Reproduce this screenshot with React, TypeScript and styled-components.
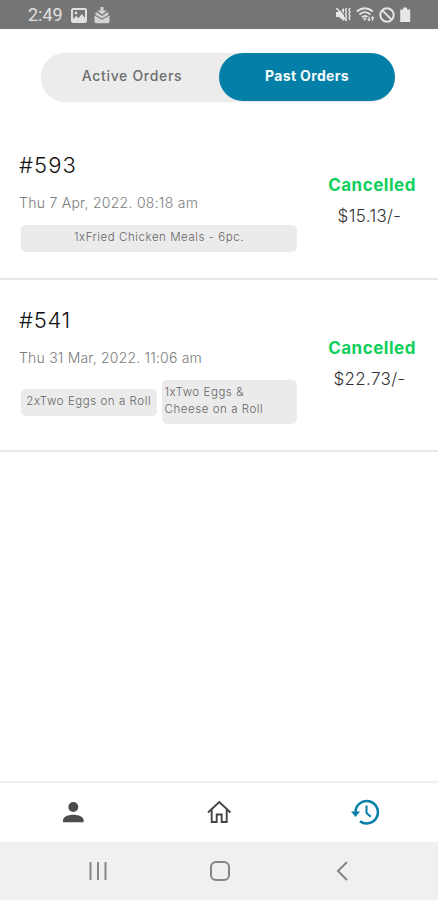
import React from "react";
import styled, { createGlobalStyle } from "styled-components";

const Global = createGlobalStyle`
  * { box-sizing: border-box; }
  body { margin: 0; background: #fff; }
`;

const Screen = styled.div`
  width: 438px;
  height: 900px;
  display: flex;
  flex-direction: column;
  overflow: hidden;
  background: #fff;
  font-family: Inter, "Open Sans", sans-serif;
`;

const StatusBar = styled.header`
  height: 29px;
  flex: none;
  display: flex;
  align-items: center;
  justify-content: space-between;
  padding: 1px 26px 0 28px;
  background: #757575;
  color: #e0e0e0;
`;

const StatusGroup = styled.div<{ $gap: number }>`
  display: flex;
  align-items: center;
  gap: ${(p) => p.$gap}px;
  svg { display: block; }
`;

const Clock = styled.span`
  width: 35px;
  margin-right: 1px;
  font: 400 18px/22px Roboto, sans-serif;
`;

const Toggle = styled.div`
  flex: none;
  width: 354px;
  height: 49px;
  margin: 24px 0 0 41px;
  display: flex;
  border-radius: 25px;
  background: #ececec;
  box-shadow: 0 0 2px #f2f2f2;
`;

const ToggleOption = styled.button<{ $active?: boolean }>`
  width: ${(p) => (p.$active ? 176 : 178)}px;
  height: 48px;
  padding: ${(p) => (p.$active ? "0 0 2px 0" : "0 0 2px 4px")};
  border: 0;
  border-radius: 24px;
  background: ${(p) => (p.$active ? "#047fa8" : "transparent")};
  color: ${(p) => (p.$active ? "#f4fbfd" : "#6d6d6d")};
  font: ${(p) => (p.$active ? "700 14px" : "500 14px")}/20px Inter, sans-serif;
  letter-spacing: ${(p) => (p.$active ? 0.35 : 0.68)}px;
  white-space: nowrap;
`;

const Orders = styled.main`
  flex: 1;
  padding-top: 23px;
`;

const Order = styled.article`
  display: flex;
  padding: 25px 0 26px 20px;
  border-bottom: 2px solid #e7e7e7;
`;

const Details = styled.div`
  width: 278px;
`;

const OrderNumber = styled.h2<{ $spacing: number }>`
  margin: 0 0 0 -1px;
  font-size: 22px;
  font-weight: 300;
  line-height: 30px;
  letter-spacing: ${(p) => p.$spacing}px;
  color: #111;
`;

const OrderDate = styled.p<{ $spacing: number }>`
  margin: 12px 0 11px -1px;
  font-size: 14px;
  font-weight: 300;
  line-height: 22px;
  letter-spacing: ${(p) => p.$spacing}px;
  color: #7c7c7c;
  white-space: nowrap;
`;

const Items = styled.div`
  display: flex;
  align-items: center;
  gap: 5px;
  padding: 0 1px;
`;

const Item = styled.span<{ $align: string }>`
  flex: 1;
  min-width: 0;
  padding: 4px 3px 6px;
  border-radius: 5px;
  background: #ebebeb;
  color: #666;
  font-size: 11.5px;
  font-weight: 300;
  line-height: 17px;
  letter-spacing: 0.55px;
  text-align: ${(p) => p.$align};
  white-space: pre;
`;

const Summary = styled.div`
  flex: 1;
  display: flex;
  flex-direction: column;
  align-items: center;
  justify-content: center;
  padding: 0 8px 2px 16px;
`;

const State = styled.strong`
  font-size: 17px;
  font-weight: 700;
  line-height: 24px;
  letter-spacing: 0.5px;
  color: #0fcf5c;
`;

const Price = styled.span`
  margin: 7px 5px 0 0;
  font-size: 17px;
  font-weight: 300;
  line-height: 24px;
  letter-spacing: 0.35px;
  color: #333;
`;

const TabBar = styled.nav`
  flex: none;
  height: 61px;
  display: grid;
  grid-template-columns: repeat(3, 146px);
  place-items: center;
  padding-bottom: 1px;
  border-top: 2px solid #f0f0f0;
  svg { display: block; }
`;

const SystemBar = styled.footer`
  flex: none;
  height: 58px;
  display: flex;
  align-items: center;
  justify-content: space-between;
  padding: 0 85px 0 87px;
  background: #f0f0f0;
  svg { display: block; }
`;

const orders = [
  {
    number: "#593", numberSpacing: 1.1,
    date: "Thu 7 Apr, 2022. 08:18 am", dateSpacing: 0.27,
    items: [{ text: "1xFried Chicken Meals - 6pc.", align: "center" }],
    price: "$15.13/-",
  },
  {
    number: "#541", numberSpacing: 0.7,
    date: "Thu 31 Mar, 2022. 11:06 am", dateSpacing: 0.2,
    items: [
      { text: "2xTwo Eggs on a Roll", align: "center" },
      { text: "1xTwo Eggs &\nCheese on a Roll", align: "left" },
    ],
    price: "$22.73/-",
  },
];

function StatusIcons() {
  return (
    <StatusGroup $gap={4}>
      <svg width="17" height="16" viewBox="0 0 17 16" fill="#e6e6e6">
        <path d="M1 5h3l5-4v13l-5-4H1z" />
        <path d="M3.300 0l10 13" stroke="#757575" strokeWidth="1.2" />
        <path d="M1.500 1l10 13" stroke="#e6e6e6" strokeWidth="1.4" />
        <path d="M11.500 1l-1 2 1 2-1 2 1 2-1 2 1 2M15 1l-1 2 1 2-1 2 1 2-1 2 1 2" fill="none" stroke="#e6e6e6" strokeWidth="1.4" />
      </svg>
      <svg width="19" height="16" viewBox="0 0 19 16" fill="none" stroke="#e6e6e6" strokeWidth="1.8">
        <path d="M.8 4.500c5-4 11-4 16 0M3.400 7.500c3.500-3 7.500-3 11 0M6 10.300c2-1.700 3.600-1.700 5.400-.3" />
        <path d="M7 11h3.500l-1.800 3z" fill="#e6e6e6" stroke="none" />
        <path d="M13 9.500v4m-1.400-1.500 1.400 1.700 1.400-1.700M16.600 14v-4m-1.400 1.500 1.400-1.700 1.400 1.700" strokeWidth="1.1" />
      </svg>
      <svg width="16" height="16" viewBox="0 0 16 16" fill="none" stroke="#e6e6e6" strokeWidth="2">
        <circle cx="8" cy="8" r="6.700" /><path d="m3.400 3.400 9.200 9.200" />
      </svg>
      <svg width="13" height="16" viewBox="0 0 13 16" fill="#e6e6e6">
        <path d="M4 .5h4v2h3.200V15H1.200V2.500H4z" />
      </svg>
    </StatusGroup>
  );
}

export default function App() {
  return (
    <Screen>
      <Global />
      <StatusBar>
        <StatusGroup $gap={7}>
          <Clock>2:49</Clock>
          <svg width="16" height="15" viewBox="0 0 16 15">
            <path fillRule="evenodd" fill="#e0e0e0" d="M1.500 0h13L16 1.500v12L14.500 15h-13L0 13.500v-12zM2 2v9l3-3 2.500 2L11 6l3 4V2z" />
            <circle cx="5" cy="5" r="1.400" fill="#e0e0e0" />
          </svg>
          <svg width="16" height="17" viewBox="0 0 16 17" fill="#d2d2d2">
            <path d="M6.500 0h3v3.500h3.500L8 7.500l-5-4h3.500z" />
            <path d="M1.500 5.500h1.700L8 9l4.800-3.500h1.700v2.300L8 11.500 1.500 7.800z" />
            <path d="M.5 8.500 8 12.800l7.500-4.300V15l-1 1.200h-13L.5 15z" />
          </svg>
        </StatusGroup>
        <StatusIcons />
      </StatusBar>

      <Toggle>
        <ToggleOption>Active Orders</ToggleOption>
        <ToggleOption $active>Past Orders</ToggleOption>
      </Toggle>

      <Orders>
        {orders.map((o) => (
          <Order key={o.number}>
            <Details>
              <OrderNumber $spacing={o.numberSpacing}>{o.number}</OrderNumber>
              <OrderDate $spacing={o.dateSpacing}>{o.date}</OrderDate>
              <Items>
                {o.items.map((i) => (
                  <Item key={i.text} $align={i.align}>{i.text}</Item>
                ))}
              </Items>
            </Details>
            <Summary>
              <State>Cancelled</State>
              <Price>{o.price}</Price>
            </Summary>
          </Order>
        ))}
      </Orders>

      <TabBar>
        <svg width="22" height="22" viewBox="0 0 22 22" fill="#4c4c4c">
          <circle cx="11.300" cy="6" r="5" /><path d="M1 21.300v-2c0-3.300 5-5.500 10.300-5.500s10.300 2.200 10.300 5.500v2z" />
        </svg>
        <svg width="26" height="26" viewBox="0 0 26 26" fill="none" stroke="#444" strokeWidth="1.900">
          <path d="M2 13.500 13.300 3l11.200 10.500M5.700 11v12h5v-7.500h5V23h5V11" />
        </svg>
        <svg width="28" height="26" viewBox="0 0 28 26" fill="none" stroke="#047fa8" strokeWidth="2.500">
          <path d="M4.500 13.500A11.200 11.200 0 1 1 9 22.200" />
          <path d="M0 12.500h9l-4.500 5.500z" fill="#047fa8" stroke="none" />
          <path d="M15.500 6.500V14l4.300 3.700" strokeWidth="2" />
        </svg>
      </TabBar>

      <SystemBar>
        <svg width="22" height="20" viewBox="0 0 22 20" stroke="#858585" strokeWidth="2">
          <path d="M3.500 1v18M11 1v18M18.500 1v18" />
        </svg>
        <svg width="22" height="22" viewBox="0 0 22 22" fill="none" stroke="#858585" strokeWidth="2">
          <rect x="2" y="2" width="18" height="18" rx="5" />
        </svg>
        <svg width="22" height="20" viewBox="0 0 22 20" fill="none" stroke="#858585" strokeWidth="2">
          <path d="M16 1 7 10l9 9" />
        </svg>
      </SystemBar>
    </Screen>
  );
}
